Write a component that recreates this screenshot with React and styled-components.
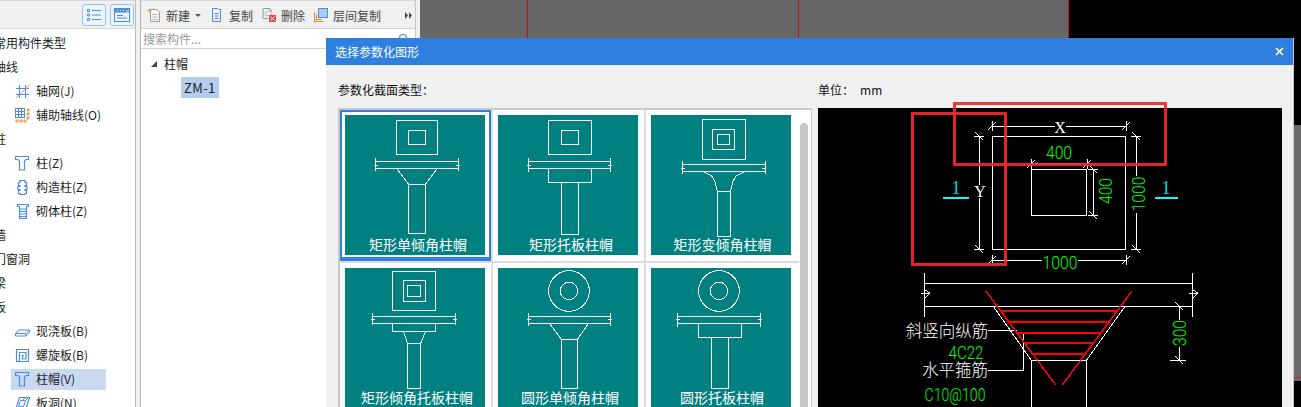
import React from "react";
import styled, { createGlobalStyle } from "styled-components";

const CJK = `"Noto Sans CJK SC", "Noto Sans", sans-serif`;
const BLUE = "#4a8ddc";
const ORANGE = "#ee8a3a";

const Global = createGlobalStyle`
  html, body { margin: 0; padding: 0; width: 1301px; height: 407px; overflow: hidden; background: #f0f0f0; }
  * { box-sizing: border-box; }
  body { font-family: ${CJK}; font-size: 12px; color: #1c1c1c; }
`;

const Page = styled.div`
  position: relative;
  display: flex;
  width: 1301px;
  height: 407px;
  overflow: hidden;
  background: #f0f0f0;
`;

const LeftPanel = styled.aside`
  width: 136px;
  margin-right: 4px;
  background: #fff;
  border-right: 1px solid #bcbcbc;
  overflow: hidden;
`;
const LeftToolbar = styled.div`
  display: flex;
  justify-content: flex-end;
  align-items: center;
  gap: 4px;
  height: 29px;
  padding: 1px 1px 0 0;
  background: #f0f0f0;
  border-top: 1px solid #d8d8d8;
  border-bottom: 1px solid #d8d8d8;
`;
const ViewButton = styled.button`
  display: flex;
  align-items: center;
  justify-content: center;
  width: 24px;
  height: 22px;
  padding: 0;
  border: 1px solid #93c6f4;
  border-radius: 3px;
  background: #eef6fd;
`;
const Tree = styled.div`
  display: flex;
  flex-direction: column;
  margin: 2px 0 0 -6px;
`;
const GroupRow = styled.div`
  height: 24px;
  line-height: 24px;
  white-space: nowrap;
`;
const ItemRow = styled.div`
  display: flex;
  align-items: center;
  gap: 6px;
  width: 95px;
  height: 21px;
  margin: 2px 0 1px 17px;
  padding-left: 4px;
  white-space: nowrap;
  background: ${(p) => (p.$selected ? "#c8d9f0" : "transparent")};
`;
const ItemText = styled.span`
  margin-top: -2px;
`;

const ListPanel = styled.section`
  width: 276px;
  margin-right: 4px;
  display: flex;
  flex-direction: column;
  background: #fff;
  border-left: 1px solid #b4b4b4;
  border-right: 1px solid #c8c8c8;
`;
const ListToolbar = styled.div`
  display: flex;
  align-items: center;
  gap: 9px;
  height: 29px;
  padding: 1px 3px 0 6px;
  background: #f0f0f0;
  border-top: 1px solid #d8d8d8;
  border-bottom: 1px solid #d0d0d0;
  color: #444;
`;
const ToolButton = styled.div`
  display: flex;
  align-items: center;
  gap: 5px;
  white-space: nowrap;
`;
const CaretDown = styled.span`
  width: 0;
  height: 0;
  border-left: 3px solid transparent;
  border-right: 3px solid transparent;
  border-top: 3px solid #555;
`;
const MoreGlyph = styled.svg`
  margin-left: auto;
`;
const SearchRow = styled.div`
  display: flex;
  align-items: center;
  justify-content: space-between;
  height: 20px;
  padding: 0 6px 0 2px;
  color: #9a9a9a;
  border-bottom: 1px solid #cfcfcf;
`;
const ComponentTree = styled.div`
  padding: 5px 0 0 10px;
`;
const ParentNode = styled.div`
  display: flex;
  align-items: center;
  gap: 7px;
  height: 19px;
`;
const Arrow = styled.span`
  width: 0;
  height: 0;
  border-left: 6px solid transparent;
  border-bottom: 6px solid #444;
`;
const ChildNode = styled.div`
  width: 38px;
  height: 21px;
  margin: 4px 0 0 30px;
  padding-left: 3px;
  line-height: 21px;
  font-size: 13px;
  letter-spacing: 0.4px;
  background: #b3cdec;
`;

const Viewport = styled.svg`
  display: block;
  flex: none;
`;

const Dialog = styled.div`
  position: absolute;
  left: 326px;
  top: 38px;
  width: 968px;
  height: 420px;
  background: #f0f0f0;
  border-right: 1px solid #c6c6c6;
`;
const TitleBar = styled.div`
  display: flex;
  align-items: center;
  justify-content: space-between;
  height: 27px;
  padding: 0 9px;
  color: #fff;
  background: #2e7fe0;
`;
const DialogBody = styled.div`
  display: flex;
  gap: 6px;
  padding: 0 11px 0 12px;
`;
const Column = styled.div`
  display: flex;
  flex-direction: column;
  flex: none;
  width: ${(p) => p.$w}px;
`;
const Heading = styled.div`
  display: flex;
  gap: 6px;
  height: 43px;
  padding-top: 16px;
  line-height: 18px;
  color: #111;
`;
const Gallery = styled.div`
  display: flex;
  height: 299px;
  overflow: hidden;
  background: #fff;
  border-top: 2px solid #c8c8c8;
  border-left: 2px solid #c8c8c8;
  border-right: 1px solid #c8c8c8;
`;
const TileGrid = styled.div`
  display: grid;
  grid-template-columns: repeat(3, 153px);
  grid-auto-rows: 153px;
  flex: none;
`;
const Cell = styled.div`
  position: relative;
  padding: 5px 0 0 5px;
  border-right: ${(p) => (p.$last ? "0" : "2px solid #dcdcdc")};
  border-bottom: 2px solid #dcdcdc;
  &::after {
    content: "";
    position: absolute;
    left: 0;
    top: 0;
    right: 0;
    bottom: 0;
    border: ${(p) => (p.$selected ? "2px solid #2e7fe0" : "0")};
    border-bottom-width: ${(p) => (p.$selected ? "4px" : "0")};
    pointer-events: none;
  }
`;
const Tile = styled.div`
  display: flex;
  flex-direction: column;
  width: 140px;
  height: 140px;
  background: #008080;
`;
const TileArt = styled.svg`
  display: block;
  flex: none;
`;
const TileLabel = styled.div`
  height: 18px;
  margin-top: -2px;
  padding-left: ${(p) => p.$shift}px;
  line-height: 18px;
  font-size: 14px;
  text-align: center;
  white-space: nowrap;
  color: #fff;
`;
const ScrollThumb = styled.div`
  flex: none;
  width: 8px;
  height: 300px;
  margin: 13px 0 0 1px;
  border-radius: 4px 4px 0 0;
  background: #c8c8c8;
`;
const PreviewPane = styled.div`
  position: relative;
  height: 299px;
  background: #000;
`;
const Preview = styled.svg`
  display: block;
`;
const CadLabel = styled.text`
  font-family: ${(p) => p.$font || `Roboto, "Liberation Mono", monospace`};
  font-size: ${(p) => p.$size || 18}px;
  font-weight: ${(p) => p.$weight || 300};
  fill: ${(p) => p.$color || "#00ff00"};
  text-anchor: middle;
  dominant-baseline: central;
`;
const Marker = styled.div`
  position: absolute;
  left: ${(p) => p.$x}px;
  top: ${(p) => p.$y}px;
  width: ${(p) => p.$w}px;
  height: ${(p) => p.$h}px;
  border: 3px solid rgba(240, 40, 46, 0.92);
  pointer-events: none;
`;

const Dim = ({ children, ...rest }) => (
  <CadLabel textLength={children.length * 8.7} lengthAdjust="spacingAndGlyphs" {...rest}>
    {children}
  </CadLabel>
);

const I15 = ({ children }) => (
  <svg width="15" height="15" viewBox="0 0 15 15" fill="none" stroke={BLUE} strokeWidth="1" style={{ flex: "none" }}>
    {children}
  </svg>
);

const Icons = {
  grid: (
    <I15>
      <path d="M4.500 1v13M10.500 1v13M1 4.500h13M1 10.500h13" />
      <path d="M14.500 1 1 14" stroke={ORANGE} />
    </I15>
  ),
  aux: (
    <I15>
      <path d="M.5 1v9M3.500 0v10M6.500 0v10M9.500 0v10M0 .5h10M0 3.500h10M0 6.500h10M0 9.500h10" />
      <path d="M12 1h2v2h-2zM12 5h2v2h-2zM12 9h2v2h-2zM1 12h2v2H1zM5 12h2v2H5zM9 12h2v2H9z" stroke={ORANGE} />
    </I15>
  ),
  column: (
    <I15>
      <path d="M.5.5h13v3h-2.500l-1.500 1.500v9h-5v-9L3 3.500H.5z" strokeWidth="1.200" />
    </I15>
  ),
  tie: (
    <I15>
      <path d="M5 .5h5v2h1.500v3H10v1h2v3h-2v1h1.500v3H10v1H5v-1H3.500v-3H5v-1H3v-3h2v-1H3.500v-3H5z" strokeWidth="1.200" />
    </I15>
  ),
  masonry: (
    <I15>
      <path d="M2.500.5h11v2h-2v12h-7v-12h-2z" strokeWidth="1.200" />
      <path d="M5 5h6M5 7.500h6M5 10h6M5 12.500h6" />
    </I15>
  ),
  slab: (
    <I15>
      <path d="M.5 9.500 4 6h10.500v2.500L11 12H.5zM.5 9.500H11l3.500-3.500M11 9.500V12" />
    </I15>
  ),
  spiral: (
    <I15>
      <path d="M1.500 1.500h12v12h-12zM4.500 13V4.500h6.500v6.500H7.500V7.500h1.500" strokeWidth="1.200" />
    </I15>
  ),
  hole: (
    <I15>
      <path d="M4.500 1.500h10l-4 12H.5z" strokeWidth="1.200" />
      <path d="M5.500 4.500h5l-2 6h-5zM3 13l2.500-3M8 4l3-3M11 4l2-2" />
    </I15>
  ),
};

const TREE = [
  { g: "常用构件类型" },
  { g: "轴线" },
  { i: "grid", t: "轴网(J)" },
  { i: "aux", t: "辅助轴线(O)" },
  { g: "柱" },
  { i: "column", t: "柱(Z)" },
  { i: "tie", t: "构造柱(Z)" },
  { i: "masonry", t: "砌体柱(Z)" },
  { g: "墙" },
  { g: "门窗洞" },
  { g: "梁" },
  { g: "板" },
  { i: "slab", t: "现浇板(B)" },
  { i: "spiral", t: "螺旋板(B)" },
  { i: "column", t: "柱帽(V)", sel: true },
  { i: "hole", t: "板洞(N)" },
];

const ListIcon = () => (
  <svg width="14" height="14" viewBox="0 0 14 14" fill="none" stroke={BLUE}>
    <path d="M.5 1.500h2v2h-2zM.5 6h2v2h-2zM.5 10.500h2v2h-2zM5 2.500h9M5 7h9M5 11.500h9" />
  </svg>
);
const WindowIcon = () => (
  <svg width="16" height="14" viewBox="0 0 16 14" fill="none" stroke={BLUE}>
    <rect x=".5" y=".5" width="15" height="13" />
    <rect x="1" y="1" width="14" height="3.500" fill={BLUE} stroke="none" />
    <path d="M3 7.500h6M3 10h10" />
    <path d="M3 2.500h1M6 2.500h1M9 2.500h1" stroke="#fff" />
    <path d="M12 2l1.500 1.500L15 2" stroke="#fff" />
  </svg>
);

const NewIcon = () => (
  <svg width="14" height="14" viewBox="0 0 14 14" fill="none">
    <path d="M3.500 1.500h6l3 3v9h-9z" stroke="#9a9a9a" fill="#fafafa" />
    <path d="M5 6.500h6M5 9h6M5 11.500h6" stroke="#bdbdbd" />
    <path d="M2.500 0l.8 1.700L5 2.500l-1.700.8L2.500 5l-.8-1.700L0 2.500l1.700-.8z" fill="#f4a338" />
  </svg>
);
const CopyIcon = () => (
  <svg width="14" height="14" viewBox="0 0 14 14" fill="none" stroke={BLUE}>
    <path d="M2.500.5h5l1 1h2v12h-8z" />
    <path d="M4.500 5.500h4M4.500 8h4M4.500 10.500h4" />
  </svg>
);
const DeleteIcon = () => (
  <svg width="14" height="14" viewBox="0 0 14 14" fill="none">
    <path d="M1 .5h7v2H10M1 .5v10h5" stroke="#999" />
    <path d="M3.500 3.500h6v4h-6z" stroke="#c4c4c4" />
    <rect x="7" y="7" width="7" height="7" fill="#e04a4a" />
    <path d="M8.500 8.500l4 4M12.500 8.500l-4 4" stroke="#fff" />
  </svg>
);
const FloorCopyIcon = () => (
  <svg width="14" height="14" viewBox="0 0 14 14" fill="none">
    <path d="M.5 4.500v9h9" stroke={ORANGE} strokeWidth="1.200" />
    <path d="M2.500 6.500v5h5" stroke={ORANGE} />
    <rect x="4.500" y=".5" width="9" height="9" fill="#a9cdf4" stroke={BLUE} />
  </svg>
);
const SearchIcon = () => (
  <svg width="12" height="12" viewBox="0 0 12 12" fill="none" stroke={BLUE} strokeWidth="1.200">
    <circle cx="6" cy="5" r="3.500" />
    <path d="M8 8l3 3" />
  </svg>
);

const sec = (x, y, w, h) => ({ k: "r", x, y, w, h });
const seg = (...p) => ({ k: "p", p });
const circ = (x, y, r) => ({ k: "c", x, y, r });
const beam = (x1, x2, y1, y2, t1, t2) => [
  sec(x1, y1, x2 - x1, y2 - y1),
  seg(x1, t1, x1, t2),
  seg(x2, t1, x2, t2),
  seg(x1 - 3, (y1 + y2) / 2, x1 + 9, (y1 + y2) / 2),
  seg(x2 - 9, (y1 + y2) / 2, x2 + 3, (y1 + y2) / 2),
];

const TILES = [
  {
    label: "矩形单倾角柱帽", shift: 6, ox: 45, oy: 345,
    parts: [sec(199, 361, 124, 102), sec(235, 391, 52, 42), ...beam(136, 386, 484, 506, 475, 512),
      seg(201, 506, 235, 552), seg(321, 506, 287, 552), sec(235, 552, 52, 148)],
  },
  {
    label: "矩形托板柱帽", shift: 6, ox: 504, oy: 345,
    parts: [sec(655, 361, 130, 103), sec(694, 391, 52, 42), ...beam(595, 842, 484, 506, 475, 515),
      sec(655, 506, 130, 42), sec(694, 548, 52, 155)],
  },
  {
    label: "矩形变倾角柱帽", shift: 3, ox: 963, oy: 345,
    parts: [sec(1117, 358, 130, 120), sec(1147, 388, 67, 60), sec(1162, 403, 37, 30), ...beam(1057, 1306, 493, 515, 484, 521),
      seg(1120, 515, 1145, 528, 1155, 545, 1162, 573), seg(1244, 515, 1218, 528, 1208, 545, 1202, 573), sec(1162, 573, 40, 136)],
  },
  {
    label: "矩形倾角托板柱帽", shift: 4, ox: 45, oy: 54,
    parts: [sec(187, 64, 130, 117), sec(220, 91, 67, 64), sec(232, 106, 40, 33), ...beam(127, 377, 199, 220, 190, 224),
      sec(187, 220, 130, 24), seg(220, 244, 232, 280), seg(287, 244, 272, 280), sec(232, 280, 40, 135)],
  },
  {
    label: "圆形单倾角柱帽", shift: 4, ox: 504, oy: 54,
    parts: [circ(717, 123, 61), circ(717, 123, 26), ...beam(595, 842, 199, 220, 190, 227),
      seg(658, 220, 694, 268), seg(776, 220, 742, 268), sec(694, 268, 48, 147)],
  },
  {
    label: "圆形托板柱帽", shift: 2, ox: 963, oy: 54,
    parts: [circ(1167, 123, 61), circ(1167, 123, 26), ...beam(1042, 1292, 199, 220, 190, 230),
      sec(1105, 220, 130, 42), sec(1144, 262, 52, 153)],
  },
];

const Part = ({ d }) => {
  if (d.k === "r") return <rect x={d.x} y={d.y} width={d.w} height={d.h} />;
  if (d.k === "c") return <circle cx={d.x} cy={d.y} r={d.r} />;
  return <polyline points={d.p.join(" ")} />;
};

const Drawing = ({ t }) => (
  <TileArt width="140" height="122" viewBox={`${t.ox} ${t.oy} 420 366`} fill="none" stroke="#fff" strokeWidth="3" shapeRendering="crispEdges">
    {t.parts.map((d, i) => (
      <Part key={i} d={d} />
    ))}
  </TileArt>
);

const Tick = ({ x, y }) => <path d={`M${x - 4} ${y + 4}L${x + 4} ${y - 4}M${x} ${y - 5}V${y + 5}`} />;
const HTick = ({ x, y }) => <path d={`M${x - 4} ${y - 4}L${x + 4} ${y + 4}M${x - 5} ${y}H${x + 5}`} />;
const Break = ({ x, y }) => <path d={`M${x - 4} ${y}H${x + 5}L${x} ${y + 5}M${x + 5} ${y}L${x} ${y - 3}`} />;

const BARS = [
  [570, 920, 152], [592, 893, 185], [617, 873, 218], [642, 850, 249], [665, 822, 282],
];
const zx = (z) => 810 + z / 3;
const zy = (z) => 260 + z / 3;

const CadDrawing = () => (
  <Preview width="464" height="299" viewBox="818 108 464 299">
    <g fill="none" stroke="#fff" strokeWidth="1" shapeRendering="crispEdges">
      <rect x="992.500" y="136.500" width="133" height="113" />
      <rect x="1031.500" y="169.500" width="55" height="46" />
      <path d="M992 126.500H1055M1066 126.500H1126" />
      <Tick x={992} y={126} /><Tick x={1126} y={126} />
      <path d="M979.500 136V185M979.500 198V249" />
      <HTick x={979} y={136} /><HTick x={979} y={249} />
      <path d="M1031 163.500H1087" />
      <Tick x={1031} y={164} /><Tick x={1087} y={164} />
      <path d="M1093.500 169V215" />
      <HTick x={1093} y={169} /><HTick x={1093} y={215} />
      <path d="M1136.500 136V176M1136.500 213V249" />
      <HTick x={1136} y={136} /><HTick x={1136} y={249} />
      <path d="M992 260.500H1042M1078 260.500H1126" />
      <Tick x={992} y={260} /><Tick x={1126} y={260} />
      <path d="M924.500 273V317M1192.500 273V317M924 283.500H1193M924 306.500H1193" />
      <Break x={925} y={293} /><Break x={1193} y={293} />
      <path d={`M${zx(550)} ${zy(139)}L${zx(663)} ${zy(300)}H${zx(830)}L${zx(945)} ${zy(139)}`} />
      <path d="M1031.500 360V407M1086.500 360V407" />
      <path d="M1170 360H1186M1179.500 306V320M1179.500 347V360" />
      <HTick x={1179} y={306} /><HTick x={1179} y={360} />
      <path d="M988 330.500H1017M988 370.500H1023.500V333" />
    </g>
    <g fill="none" stroke="#ff0000" strokeWidth="1.500" shapeRendering="crispEdges">
      <path d={`M${zx(527)} ${zy(92)}L${zx(737)} ${zy(375)}M${zx(965)} ${zy(94)}L${zx(757)} ${zy(375)}`} />
      {BARS.map(([a, b, y]) => (
        <path key={y} d={`M${zx(a)} ${zy(y)}H${zx(b)}`} strokeWidth="2" />
      ))}
    </g>
    <path d="M943 197.500H969M1155 197.500H1178" stroke="#00ffff" strokeWidth="2" shapeRendering="crispEdges" />
    <CadLabel x="1060" y="127" $color="#fff" $font={`"Liberation Serif", serif`} $size={16} $weight={400}>X</CadLabel>
    <CadLabel x="980" y="191" $color="#fff" $font={`"Liberation Serif", serif`} $size={16} $weight={400}>Y</CadLabel>
    <Dim x="1059" y="152">400</Dim>
    <Dim x="1105" y="191" transform="rotate(-90 1105 191)">400</Dim>
    <Dim x="1138" y="194" transform="rotate(-90 1138 194)">1000</Dim>
    <Dim x="1060" y="262">1000</Dim>
    <CadLabel x="956" y="188" $color="#00d8e8" $font={`"Liberation Serif", serif`} $size={18} $weight={400}>1</CadLabel>
    <CadLabel x="1166" y="188" $color="#00d8e8" $font={`"Liberation Serif", serif`} $size={18} $weight={400}>1</CadLabel>
    <Dim x="1179" y="333" transform="rotate(-90 1179 333)">300</Dim>
    <CadLabel x="947" y="330" $color="#fff" $font={CJK} $size={16.5} $weight={300}>斜竖向纵筋</CadLabel>
    <Dim x="966" y="352">4C22</Dim>
    <CadLabel x="955" y="369" $color="#fff" $font={CJK} $size={16.5} $weight={300}>水平箍筋</CadLabel>
    <Dim x="955" y="394">C10@100</Dim>
  </Preview>
);

export default function App() {
  return (
    <>
      <Global />
      <Page>
        <LeftPanel>
          <LeftToolbar>
            <ViewButton><ListIcon /></ViewButton>
            <ViewButton><WindowIcon /></ViewButton>
          </LeftToolbar>
          <Tree>
            {TREE.map((r, i) =>
              r.g ? (
                <GroupRow key={i}>{r.g}</GroupRow>
              ) : (
                <ItemRow key={i} $selected={r.sel}>
                  {Icons[r.i]}
                  <ItemText>{r.t}</ItemText>
                </ItemRow>
              )
            )}
          </Tree>
        </LeftPanel>

        <ListPanel>
          <ListToolbar>
            <ToolButton><NewIcon />新建<CaretDown /></ToolButton>
            <ToolButton><CopyIcon />复制</ToolButton>
            <ToolButton><DeleteIcon />删除</ToolButton>
            <ToolButton><FloorCopyIcon />层间复制</ToolButton>
            <MoreGlyph width="7" height="7" viewBox="0 0 7 7" fill="#444">
              <path d="M0 0l3 3.500-3 3.500zM4 0l3 3.500-3 3.500z" />
            </MoreGlyph>
          </ListToolbar>
          <SearchRow>
            <span>搜索构件...</span>
            <SearchIcon />
          </SearchRow>
          <ComponentTree>
            <ParentNode><Arrow />柱帽</ParentNode>
            <ChildNode>ZM-1</ChildNode>
          </ComponentTree>
        </ListPanel>

        <Viewport width="881" height="407" viewBox="420 0 881 407">
          <rect x="420" y="0" width="881" height="407" fill="#000" />
          <rect x="420" y="0" width="648" height="407" fill="#666" />
          <rect x="1294" y="125" width="7" height="256" fill="#6a6a6a" />
          <path d="M527.500 0V407M798.500 0V407M1068.500 0V407" stroke="#c3141c" strokeWidth="1" />
          <path d="M1294 377.500H1301" stroke="#d01c24" strokeWidth="1" />
        </Viewport>

        <Dialog>
          <TitleBar>
            <span>选择参数化图形</span>
            <svg width="9" height="9" viewBox="0 0 9 9" stroke="#fff" strokeWidth="1.600">
              <path d="M1 1l7 7M8 1L1 8" />
            </svg>
          </TitleBar>
          <DialogBody>
            <Column $w={474}>
              <Heading>参数化截面类型：</Heading>
              <Gallery>
                <TileGrid>
                  {TILES.map((t, i) => (
                    <Cell key={t.label} $selected={i === 0} $last={i % 3 === 2}>
                      <Tile>
                        <Drawing t={t} />
                        <TileLabel $shift={t.shift}>{t.label}</TileLabel>
                      </Tile>
                    </Cell>
                  ))}
                </TileGrid>
                <ScrollThumb />
              </Gallery>
            </Column>
            <Column $w={464}>
              <Heading><span>单位：</span><span>mm</span></Heading>
              <PreviewPane>
                <CadDrawing />
                <Marker $x={93} $y={4} $w={96} $h={154} />
                <Marker $x={135} $y={-6} $w={214} $h={64} />
              </PreviewPane>
            </Column>
          </DialogBody>
        </Dialog>
      </Page>
    </>
  );
}
